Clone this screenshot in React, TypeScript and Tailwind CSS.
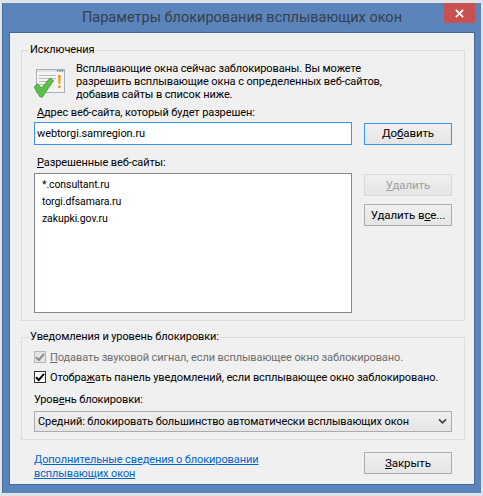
import { ReactNode } from 'react';

const font = { fontFamily: 'Roboto, sans-serif' };

function WinButton({ children, state }: { children: ReactNode; state?: 'default' | 'disabled' }) {
  const cls =
    state === 'default'
      ? 'border-[#3c94e8] text-[#000]'
      : state === 'disabled'
        ? 'border-[#d9d9d9] text-[#a0a0a0]'
        : 'border-[#acacac] text-[#000]';
  return (
    <button
      type="button"
      className={`block w-[88px] h-[22px] border ${cls} bg-gradient-to-b from-[#f0f0f0] to-[#e5e5e5] text-[11.5px] tracking-[-0.1px] leading-[19px] text-center`}
    >
      {children}
    </button>
  );
}

function Checkbox({ disabled }: { disabled?: boolean }) {
  return (
    <span
      className={`w-[12px] h-[12px] border flex items-center justify-center shrink-0 ${
        disabled ? 'border-[#b5b5b5] bg-[#e4e4e4]' : 'border-[#333] bg-white'
      }`}
    >
      <svg viewBox="0 0 10 10" className="w-[10px] h-[10px]">
        <path
          d="M1 5.2 L3.8 8 L9 1.8"
          fill="none"
          stroke={disabled ? '#8a8a8a' : '#000'}
          strokeWidth="2"
        />
      </svg>
    </span>
  );
}

function PopupIcon() {
  return (
    <svg viewBox="0 0 32 32" className="w-[32px] h-[32px] shrink-0 -ml-[1px]">
      <rect x="3.5" y="2.5" width="28" height="23" fill="#f4f4f2" stroke="#a9aeb4" />
      <rect x="4" y="3" width="27" height="2" fill="#dfe3e8" />
      <rect x="24" y="3" width="1.5" height="1.5" fill="#6b7a8c" />
      <rect x="26.5" y="3" width="1.5" height="1.5" fill="#6b7a8c" />
      <rect x="28.8" y="3" width="1.5" height="1.5" fill="#6b7a8c" />
      <path d="M6 8.5h17M6 11.5h17M6 14.5h15M6 17.5h10M6 20.5h6" stroke="#b9b9b9" strokeWidth="1" />
      <path d="M25 8 h2.8 l-0.5 9 h-1.8 z" fill="#ee9a1e" />
      <rect x="25.2" y="18.5" width="2.4" height="2.6" fill="#ee9a1e" />
      <path
        d="M1 20 L4.5 16.5 L8.5 21 L17 11 L20.5 13.5 L9.5 30 L7 30 Z"
        fill="#5cc04a"
        stroke="#3f9a35"
        strokeWidth="0.8"
      />
    </svg>
  );
}

export default function App() {
  return (
    <div className="w-[483px] h-[496px] bg-[#dfe4ea] pl-[2px] pr-[2px] pt-[3px] pb-[3px]" style={font}>
      <div className="relative h-[490px] bg-[#5a84ba] border-l border-[#44709f] px-[6px] flex flex-col">
        {/* Title bar */}
        <div className="h-[29px] flex items-center justify-center text-[14.5px] text-[#34404c] shrink-0 whitespace-nowrap">
          Параметры блокирования всплывающих окон
        </div>
        <div className="absolute top-0 right-[6px] w-[31px] h-[20px] bg-[#c75050] flex items-center justify-center">
          <svg viewBox="0 0 10 10" className="w-[9px] h-[9px]">
            <path d="M1 1 L9 9 M9 1 L1 9" stroke="#fff" strokeWidth="2" />
          </svg>
        </div>

        {/* Dialog body */}
        <div className="h-[453px] bg-[#f0f0f0] border border-[#3f6a9c] text-[11px] tracking-[-0.1px] leading-[13px] text-[#000] pl-[11px] pr-[9px] pt-[10px]">
          <fieldset className="h-[278px] border border-[#dcdcdc] pl-[12px] pr-[12px]">
            <legend className="-ml-[5px] px-[1px] leading-[14px]">Исключения</legend>
            <div className="flex gap-[11px] pt-[2px]">
              <div className="pt-[8px]">
                <PopupIcon />
              </div>
              <p className="w-[312px] leading-[13px] pt-[3px]">
                Всплывающие окна сейчас заблокированы. Вы можете разрешить всплывающие окна с
                определенных веб-сайтов, добавив сайты в список ниже.
              </p>
            </div>
            <div className="pl-[3px] mt-[5px] h-[14px] leading-[14px]">
              <u>А</u>дрес веб-сайта, который будет разрешен:
            </div>
            <div className="flex items-center justify-between mt-[2px]">
              <input
                readOnly
                value="webtorgi.samregion.ru"
                className="w-[318px] h-[23px] border border-[#3c94e8] bg-white px-[2px] outline-none"
              />
              <WinButton state="default">
                До<u>б</u>авить
              </WinButton>
            </div>
            <div className="pl-[3px] mt-[11px] h-[14px] leading-[14px]">
              <u>Р</u>азрешенные веб-сайты:
            </div>
            <div className="flex justify-between mt-[3px]">
              <div className="w-[318px] h-[140px] border border-[#828790] bg-white pl-[7px] pt-[2px] text-[10.5px] leading-[17px]">
                <div>*.consultant.ru</div>
                <div>torgi.dfsamara.ru</div>
                <div>zakupki.gov.ru</div>
              </div>
              <div className="flex flex-col gap-[8px] pt-[1px]">
                <WinButton state="disabled">
                  <u>У</u>далить
                </WinButton>
                <WinButton>
                  Удалить в<u>с</u>е...
                </WinButton>
              </div>
            </div>
          </fieldset>

          <fieldset className="h-[110px] mt-[9px] border border-[#dcdcdc] pl-[12px] pr-[11px]">
            <legend className="-ml-[5px] px-[1px] leading-[14px]">
              Уведомления и уровень блокировки:
            </legend>
            <div className="flex items-center gap-[4px] h-[14px] mt-[6px] text-[#6d6d6d] whitespace-nowrap">
              <Checkbox disabled />
              <span>
                <u>П</u>одавать звуковой сигнал, если всплывающее окно заблокировано.
              </span>
            </div>
            <div className="flex items-center gap-[4px] h-[14px] mt-[6px] whitespace-nowrap">
              <Checkbox />
              <span>
                Отобра<u>ж</u>ать панель уведомлений, если всплывающее окно заблокировано.
              </span>
            </div>
            <div className="mt-[9px] h-[14px] leading-[14px]">
              Уров<u>е</u>нь блокировки:
            </div>
            <div className="mt-[4px] h-[21px] w-[418px] border border-[#acacac] bg-gradient-to-b from-[#f0f0f0] to-[#e5e5e5] flex items-center justify-between pl-[3px] pr-[4px] whitespace-nowrap">
              <span>Средний: блокировать большинство автоматически всплывающих окон</span>
              <svg viewBox="0 0 10 8" className="w-[9px] h-[7px]">
                <path d="M1 1.5 L5 5.5 L9 1.5" fill="none" stroke="#444" strokeWidth="2" />
              </svg>
            </div>
          </fieldset>

          <div className="flex justify-between items-start pl-[13px] pr-[13px] mt-[12px]">
            <a href="#" className="w-[240px] text-[#0066cc] underline leading-[14px] pt-[1px]">
              Дополнительные сведения о блокировании всплывающих окон
            </a>
            <WinButton>
              <u>З</u>акрыть
            </WinButton>
          </div>
        </div>
      </div>
    </div>
  );
}
